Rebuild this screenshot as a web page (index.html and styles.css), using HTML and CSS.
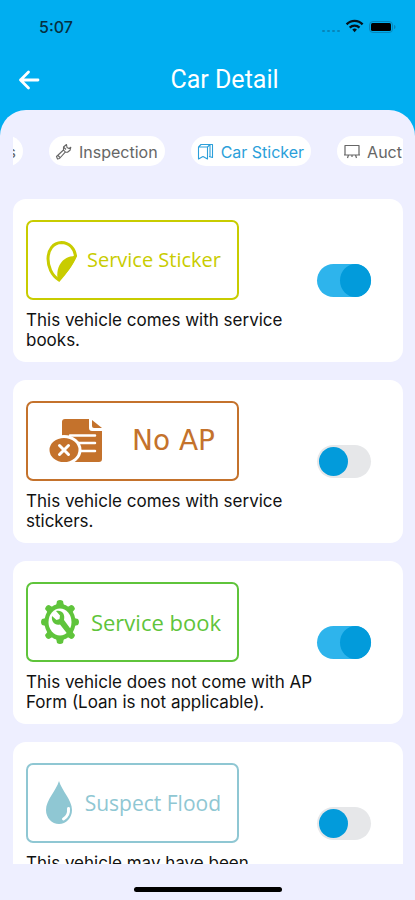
FILE: index.html
```html
<!DOCTYPE html>
<html lang="en">
<head>
<meta charset="utf-8">
<meta name="viewport" content="width=device-width, initial-scale=1">
<title>Car Detail</title>
<link rel="stylesheet" href="styles.css">
</head>
<body>
<div class="app">
  <header class="header">
    <div class="status">
      <time class="clock">5:07</time>
      <svg class="status-icons" width="78" height="18" viewBox="0 0 78 18" aria-hidden="true">
        <g fill="#0785b8"><rect x="1" y="12" width="3" height="2" rx="1"/><rect x="6" y="12" width="3" height="2" rx="1"/><rect x="11" y="12" width="3" height="2" rx="1"/><rect x="16" y="12" width="3" height="2" rx="1"/></g>
        <g fill="none" stroke="#05121a" stroke-width="2.300"><path d="M25.600 6.400a11 11 0 0 1 16 0"/><path d="M28.700 9.600a7 7 0 0 1 9.800 0"/></g>
        <path d="M33.600 14.200l-2.300-2.600a3.500 3.500 0 0 1 4.600 0z" fill="#05121a"/>
        <rect x="48.500" y="3.500" width="23" height="11" rx="3.500" fill="none" stroke="#0786ba"/>
        <rect x="50" y="5" width="20" height="8" rx="1.500" fill="#000"/>
        <path d="M73 7v4c2-.6 2-3.400 0-4z" fill="#0786ba"/>
      </svg>
    </div>
    <div class="titlebar">
      <button class="back" type="button" aria-label="Back">
        <svg width="24" height="24" viewBox="0 0 24 24" fill="none" stroke="#fff" stroke-width="2.800" stroke-linecap="round" stroke-linejoin="round"><path d="M21 12H3.500M11.500 4L3.500 12l8 8"/></svg>
      </button>
      <h1 class="title">Car Detail</h1>
    </div>
  </header>
  <main class="panel">
    <nav class="tabs">
      <a class="tab tab-first" href="#previous">s</a>
      <a class="tab" href="#inspection">
        <svg width="18" height="18" viewBox="0 0 18 18" fill="none" stroke="#666" stroke-width="1.100" stroke-linejoin="round"><path d="M1.500 13.500L8.500 7V4l3-2.500.5 3 2 1 1.800-1.200-.8 3-2.500 2H10L4.500 15.500 2.500 16zM3 12.500l2 2M8.500 7l2 2.200M8.500 4l2.500 2.500"/></svg>
        Inspection</a>
      <a class="tab tab-active" href="#sticker" aria-current="page">
        <svg width="18" height="18" viewBox="0 0 18 18" fill="none" stroke="#2b9fda" stroke-width="1.100" stroke-linejoin="round"><path d="M1.500 4h9v12L6 13.500 1.500 16zM1.500 4L4 1.500h11.500v13l-3.500-1M10.500 4L13 1.500v12"/></svg>
        Car Sticker</a>
      <a class="tab" href="#auction">
        <svg width="18" height="18" viewBox="0 0 18 18" fill="none" stroke="#666" stroke-width="1.200" stroke-linejoin="round"><path d="M2 2.500h14V12H2zM1 12h16M5.500 12L4.500 15M12.500 12l1 3M9 12v2"/></svg>
        Auct</a>
    </nav>
    <div class="list">
      <section class="card">
        <div class="info">
          <div class="badge badge-sticker">
            <svg class="icon" width="34" height="44" viewBox="0 0 34 44"><path d="M13 42C-2 33-2 5 15.500 4.500c8 0 13 6.500 14 13C25 27 20 34 13 42z" fill="none" stroke="currentColor" stroke-width="3"/><path d="M12 43C9 31 15 17 31 18 26 29 21 35 12 43z" fill="currentColor"/></svg>
            <span>Service Sticker</span>
          </div>
          <label class="desc" for="t1">This vehicle comes with service books.</label>
        </div>
        <input class="switch" type="checkbox" id="t1" checked>
      </section>
      <section class="card">
        <div class="info">
          <div class="badge badge-ap">
            <svg class="icon" width="54" height="44" viewBox="0 0 54 44"><path d="M16 0h24v9q0 3 3 3h10v28q0 3-3 3H16a3 3 0 0 1-3-3V3a3 3 0 0 1 3-3z" fill="currentColor"/><path d="M43 1l10 8h-8q-2 0-2-2z" fill="currentColor"/><g stroke="#fff" stroke-width="2.500" stroke-linecap="round"><path d="M21 16.500h25M24 24h22M29 32h17"/></g><ellipse cx="15" cy="31" rx="16" ry="13.500" fill="currentColor" stroke="#fff" stroke-width="3"/><path d="M10.500 26.500l9 9M19.500 26.500l-9 9" stroke="#fff" stroke-width="3" stroke-linecap="round"/></svg>
            <span>No AP</span>
          </div>
          <label class="desc" for="t2">This vehicle comes with service stickers.</label>
        </div>
        <input class="switch" type="checkbox" id="t2">
      </section>
      <section class="card">
        <div class="info">
          <div class="badge badge-book">
            <svg class="icon" width="38" height="44" viewBox="0 0 38 44"><g fill="currentColor"><ellipse cx="19" cy="22" rx="15.500" ry="18"/><path d="M16 1q3-2 6 0l1 5h-8zM16 43q3 2 6 0l1-5h-8zM1 19q-2 3 0 6l4 1v-8zM37 19q2 3 0 6l-4 1v-8zM4 9q1-4 4-4l5 3-5 6zM34 9q-1-4-4-4l-5 3 5 6zM4 35q1 4 4 4l5-3-5-6zM34 35q-1 4-4 4l-5-3 5-6z"/></g><ellipse cx="19" cy="22" rx="11.500" ry="13.500" fill="#fff"/><path d="M11 16l4.500 4 3-1 .5-3.500-4-4.500c5.500-1.500 9.500 2.500 8 9l7 9.500-3.500 4.500-7.500-9.500c-5 1.500-9-3-8-8.500z" fill="currentColor"/></svg>
            <span>Service book</span>
          </div>
          <label class="desc" for="t3">This vehicle does not come with AP Form (Loan is not applicable).</label>
        </div>
        <input class="switch" type="checkbox" id="t3" checked>
      </section>
      <section class="card">
        <div class="info">
          <div class="badge badge-flood">
            <svg class="icon" width="26" height="44" viewBox="0 0 26 44"><path d="M13 0C16 10 26 19 26 29c0 8-6 14-13 14S0 37 0 29C0 19 10 10 13 0z" fill="currentColor"/><path d="M22.500 27.500c.5 5-1.500 8.500-5 10.500" fill="none" stroke="#fff" stroke-width="3" stroke-linecap="round"/></svg>
            <span>Suspect Flood</span>
          </div>
          <label class="desc" for="t4">This vehicle may have been</label>
        </div>
        <input class="switch" type="checkbox" id="t4">
      </section>
    </div>
    <div class="home"></div>
  </main>
</div>
</body>
</html>
```
FILE: styles.css
```css
* { box-sizing: border-box; }
body { margin: 0; background: #00aef0; font-family: Inter, sans-serif; color: #111; }
.app { height: 100vh; display: flex; flex-direction: column; overflow: hidden; }
.header { flex: none; padding-top: 16px; }
.status { display: flex; justify-content: space-between; align-items: center; height: 22px; padding: 0 16px 0 39px; }
.clock { font-size: 16px; font-weight: 500; color: #06303f; }
.titlebar { display: grid; grid-template-columns: 60px 1fr 26px; align-items: center; height: 72px; padding-top: 12px; }
.back { width: 24px; height: 24px; margin-left: 17px; padding: 0; border: 0; background: none; }
.back svg { display: block; }
.title { margin: 0; text-align: center; font: 400 25px/32px Roboto, sans-serif; color: #fff; }
.panel { flex: 1; min-height: 0; display: flex; flex-direction: column; padding: 26px 12px 8px 13px; background: #eeefff; border-radius: 26px 26px 0 0; }
.tabs { flex: none; display: flex; gap: 26px; overflow: hidden; }
.tab { flex: none; display: flex; align-items: center; gap: 6px; height: 30px; padding: 2px 7px 0 6px; border-radius: 15px; background: #fff; color: #666; font-size: 16px; text-decoration: none; }
.tab-first { width: 40px; margin-left: -30px; justify-content: flex-end; }
.tab-active { color: #2b9fda; }
.list { flex: 1; min-height: 0; display: flex; flex-direction: column; gap: 18px; margin-top: 33px; overflow: hidden; }
.card { flex: none; display: flex; align-items: center; justify-content: space-between; padding: 12px 32px 12px 13px; background: #fff; border-radius: 13px; }
.info { flex: none; width: 290px; padding-top: 9px; }
.badge { display: flex; align-items: center; justify-content: space-between; width: 213px; height: 80px; padding: 0 16px 0 18px; border: 2px solid; border-radius: 7px; font: 400 20px/28px "Open Sans", sans-serif; }
.icon { flex: none; }
.badge-sticker { color: #c8cc00; }
.badge-ap { color: #c4722c; padding: 0 22px 0 21px; font: 400 28px/32px "DejaVu Sans", sans-serif; }
.badge-book { color: #5fc43b; padding-left: 13px; font-size: 22px; }
.badge-flood { color: #8fc7d3; font-size: 21px; }
.desc { display: block; min-height: 40px; margin-top: 10px; font-size: 17px; line-height: 20px; }
.switch { appearance: none; flex: none; display: flex; align-items: center; width: 54px; height: 33px; margin: 0; padding: 2px; border-radius: 17px; background: #e6e7e9; }
.switch::before { content: ""; width: 29px; height: 29px; border-radius: 50%; background: #029bdb; }
.switch:checked { justify-content: flex-end; padding: 0; background: #2eb4ec; }
.switch:checked::before { width: 31px; height: 33px; }
.home { flex: none; align-self: center; width: 148px; height: 5px; margin-top: 23px; border-radius: 3px; background: #000; }
```
